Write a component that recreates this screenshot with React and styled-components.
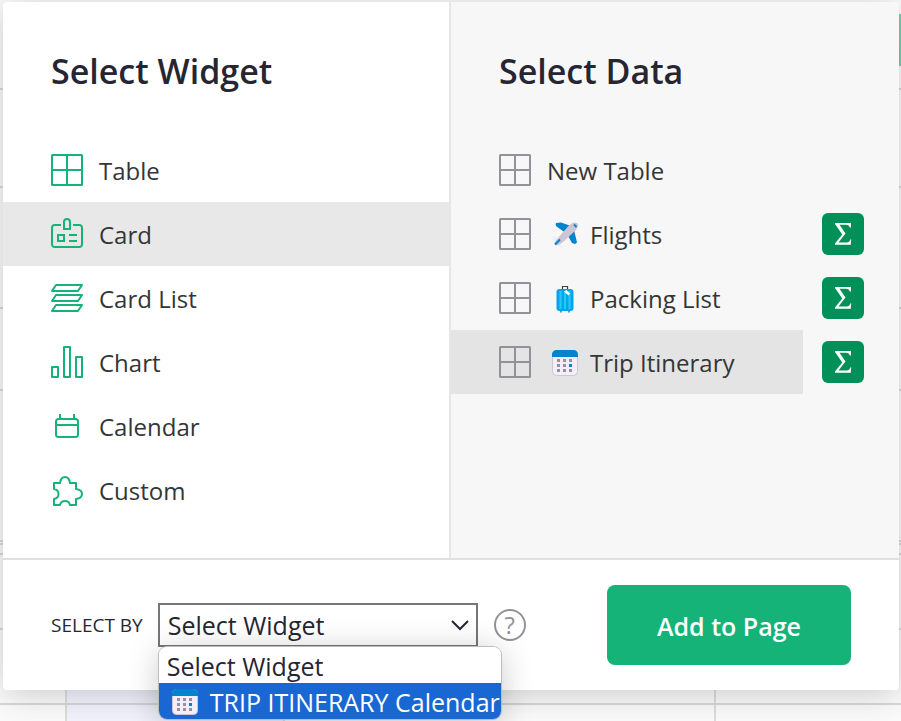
import React, { useState } from "react";
import styled, { createGlobalStyle, css } from "styled-components";

const GlobalStyle = createGlobalStyle`
  *, *::before, *::after { box-sizing: border-box; }
  body {
    margin: 0;
    background: #fff;
    color: #262633;
    font-family: "Open Sans", "Noto Sans", sans-serif;
    font-size: 24px;
    line-height: 32px;
  }
  button, select { font: inherit; color: inherit; }
`;

const Page = styled.div`
  display: grid;
  min-height: 100vh;
`;

const Backdrop = styled.div`
  grid-area: 1 / 1;
  display: flex;
  flex-direction: column;
  background: #fcfcfc;
`;

const BackdropRow = styled.div`
  display: flex;
  justify-content: flex-end;
  height: ${(p) => p.$height}px;
  border-bottom: 2px solid #dadada;
`;

const BackdropAction = styled.div`
  width: 4px;
  height: 52px;
  margin-top: 14px;
  background: #16b378;
  opacity: 0.6;
`;

const BackdropColumns = styled.div`
  flex: 1;
  display: grid;
  grid-template-columns: 67px 218px 431px 1fr;
`;

const BackdropTableRow = styled(BackdropColumns)`
  flex: none;
  height: 75px;
  border-bottom: 2px solid #dadada;
`;

const BackdropCell = styled.div`
  border-right: 2px solid #dedede;
  background: ${(p) => (p.$selected ? "#f4f4ff" : "transparent")};
`;

const Modal = styled.div`
  grid-area: 1 / 1;
  align-self: start;
  z-index: 1;
  display: flex;
  flex-direction: column;
  margin: 2px 2px 31px 3px;
  border-radius: 4px;
  background: #fff;
  box-shadow: 0 4px 36px rgba(38, 38, 51, 0.24);
`;

const Panels = styled.div`
  display: flex;
  border-bottom: 2px solid #e0e0e0;
`;

const Panel = styled.section`
  width: 50%;
  padding-bottom: 36px;
  ${(p) =>
    p.$tinted
      ? css`
          background: #f7f7f7;
          border-radius: 0 4px 0 0;
        `
      : css`
          border-right: 2px solid #e6e6e6;
        `}
`;

const Heading = styled.h2`
  margin: 0;
  padding: 45px 48px 43px;
  font-size: 34px;
  line-height: 48px;
  font-weight: 600;
`;

const List = styled.ul`
  margin: 0;
  padding: 0;
  list-style: none;
`;

const Row = styled.li`
  display: flex;
  align-items: center;
  padding-right: ${(p) => (p.$inset ? 35 : 0)}px;
`;

const Choice = styled.button`
  flex: 1;
  display: flex;
  align-items: center;
  gap: 16px;
  height: 64px;
  padding: 0 0 0 48px;
  border: 0;
  background: ${(p) => (p.$selected ? p.$tone : "transparent")};
  color: #353535;
  text-align: left;
  cursor: pointer;
`;

const ChoiceLabel = styled.span`
  display: flex;
  align-items: center;
  gap: 8px;
  padding-top: 2px;
`;

const Icon = styled.svg`
  flex: none;
  width: 32px;
  height: 32px;
  fill: none;
  stroke: ${(p) => (p.$muted ? "#929299" : "#16b378")};
  stroke-width: 2;
`;

const Emoji = styled.svg`
  flex: none;
  width: 35px;
  height: 28px;
`;

const SummaryButton = styled.button`
  display: grid;
  place-items: center;
  width: 42px;
  height: 42px;
  margin-left: 19px;
  padding: 0;
  border: 0;
  border-radius: 6px;
  background: #009058;
  cursor: pointer;
`;

const SumMark = styled.svg`
  width: 18px;
  height: 24px;
  fill: #fff;
`;

const Footer = styled.footer`
  display: flex;
  align-items: center;
  padding: 25px 48px;
`;

const FieldLabel = styled.label`
  margin-right: 15px;
  font-size: 19px;
  line-height: 24px;
  white-space: nowrap;
`;

const SelectBox = styled.div`
  position: relative;
  width: 320px;
  font-size: 25px;
`;

const Select = styled.select`
  display: block;
  width: 100%;
  height: 44px;
  padding: 0 40px 0 8px;
  appearance: none;
  border: 2px solid #767676;
  border-radius: 0;
  background: #fff;
  outline: none;
`;

const Chevron = styled.svg`
  position: absolute;
  top: 14px;
  right: 8px;
  width: 20px;
  height: 16px;
  fill: none;
  stroke: #262633;
  stroke-width: 2;
  pointer-events: none;
`;

const Menu = styled.ul`
  position: absolute;
  top: 100%;
  left: 1px;
  z-index: 2;
  width: 342px;
  margin: 0;
  padding: 0;
  list-style: none;
  overflow: hidden;
  border-radius: 8px;
  background: #fff;
  box-shadow: 0 0 0 1px #bdbdbd, 0 4px 32px rgba(0, 0, 0, 0.22);
`;

const MenuItem = styled.li`
  display: flex;
  align-items: center;
  gap: 8px;
  height: 36px;
  padding: 2px 0 0 8px;
  white-space: nowrap;
  background: ${(p) => (p.$active ? "#1967d2" : "#fff")};
  color: ${(p) => (p.$active ? "#fff" : "#262633")};
`;

const HelpButton = styled.button`
  flex: none;
  width: 32px;
  height: 32px;
  margin-left: 16px;
  padding: 0;
  border: 2px solid #929299;
  border-radius: 50%;
  background: transparent;
  color: #929299;
  line-height: 28px;
  cursor: pointer;
`;

const PrimaryButton = styled.button`
  width: 244px;
  height: 80px;
  margin-left: auto;
  padding: 2px 0 0;
  border: 0;
  border-radius: 8px;
  background: #16b378;
  color: #fff;
  font-size: 25px;
  font-weight: 600;
  cursor: pointer;
`;

const TableIcon = ({ muted }) => (
  <Icon viewBox="0 0 32 32" $muted={muted} aria-hidden="true">
    <rect x="1" y="1" width="30" height="30" rx="0.5" />
    <path d="M16 1v30M1 16h30" />
  </Icon>
);

const CardIcon = () => (
  <Icon viewBox="0 0 32 32" aria-hidden="true">
    <path d="M10 7H3.5A2.5 2.5 0 0 0 1 9.5V26.5A2.5 2.5 0 0 0 3.5 29H28.5A2.5 2.5 0 0 0 31 26.5V9.5A2.5 2.5 0 0 0 28.5 7H22" />
    <path d="M13 11V4a3 3 0 0 1 6 0v7zM7 17h6v6H7zM18 17h8M18 23h8" />
  </Icon>
);

const CardListIcon = () => (
  <Icon viewBox="0 0 32 32" strokeLinejoin="round" aria-hidden="true">
    <path d="M5 3h26l-4 6H1zM5 13h26l-4 6H1zM5 23h26l-4 6H1z" />
  </Icon>
);

const ChartIcon = () => (
  <Icon viewBox="0 0 32 32" strokeLinejoin="round" aria-hidden="true">
    <path d="M1 21h6v10H1zM13 1h6v30h-6zM25 11h6v20h-6z" />
  </Icon>
);

const CalendarIcon = () => (
  <Icon viewBox="0 0 32 32" aria-hidden="true">
    <rect x="5" y="9" width="22" height="18" rx="2.5" />
    <path d="M5 15h22M9 4v5M23 4v5" />
  </Icon>
);

const PuzzleIcon = () => (
  <Icon viewBox="0 0 32 32" strokeLinejoin="round" aria-hidden="true">
    <path d="M3 9H9C9.5 5.5 11 3 14 3S18.5 5.5 19 9H25V15C28.5 15.5 31 17 31 20S28.5 24.5 25 25V31H19C18.5 28.5 17 27 14 27S9.5 28.5 9 31H3V25C5.5 24.5 7.5 23 7.5 20S5.5 15.5 3 15Z" />
  </Icon>
);

const PlaneEmoji = () => (
  <Emoji viewBox="-1 0 35 28" aria-hidden="true">
    <path d="M8 2 13 1.5 23 5l-6 6.5L8.500 5.500Q7 4 8 2ZM29 21.500l-2 1.500L24 22 19.500 14l6.500-5Z" fill="#0084ce" />
    <path d="M4 15.500 7 15l6 4-1 4 3 3.500-1 1.500L8 22.500 4 16.500Z" fill="#f3eef8" />
    <path d="M23.500 2.500C26 .8 29.500 1 30 3.500Q30.500 6 28 9L14.500 21.500Q10 25 7.500 24T9 18L20 5.500Z" fill="#cdc4d6" />
    <path d="m26 3.500 2.500 2.500M7 23.500l5-5" stroke="#0084ce" strokeWidth="2" />
  </Emoji>
);

const SuitcaseEmoji = () => (
  <Emoji viewBox="-1 0 35 28" aria-hidden="true">
    <path d="M14.500 5V1.500h5V5M13 25v2.500M21 25v2.500" fill="none" stroke="#433b4b" strokeWidth="1.200" />
    <rect x="8.500" y="4" width="17" height="22" rx="3" fill="#00a6ed" />
    <path d="M12.500 6v18M17 6v18M21.500 6v18" stroke="#26c9fc" strokeWidth="2" />
    <path d="m16 6.500 2.500-1.500 3.500 3.500-1.500 2Z" fill="#fff" />
  </Emoji>
);

const CalendarEmoji = () => (
  <Emoji viewBox="-1 0 35 28" aria-hidden="true">
    <rect x="4.500" y="1.500" width="25" height="25" rx="4" fill="#f3eef8" stroke="#cdc4d6" />
    <path d="M4 8V5.500A4.500 4.500 0 0 1 8.500 1h17A4.500 4.500 0 0 1 30 5.500V8Z" fill="#0084ce" />
    <path d="M9 10h3v3H9zM15 10h3v3h-3zM21 10h3v3h-3zM9 15h3v3H9zM15 15h3v3h-3zM9 20h3v3H9zM15 20h3v3h-3zM21 20h3v3h-3z" fill="#998ea4" />
    <path d="M21 15h3v3h-3z" fill="#0084ce" />
  </Emoji>
);

const WIDGETS = [
  { name: "Table", Glyph: TableIcon },
  { name: "Card", Glyph: CardIcon },
  { name: "Card List", Glyph: CardListIcon },
  { name: "Chart", Glyph: ChartIcon },
  { name: "Calendar", Glyph: CalendarIcon },
  { name: "Custom", Glyph: PuzzleIcon },
];

const TABLES = [
  { name: "Flights", Glyph: PlaneEmoji },
  { name: "Packing List", Glyph: SuitcaseEmoji },
  { name: "Trip Itinerary", Glyph: CalendarEmoji },
];

const BACKDROP_ROWS = [98, 121, 82, 151, 3, 10];

export default function App() {
  const [widget, setWidget] = useState("Card");
  const [table, setTable] = useState("Trip Itinerary");

  return (
    <>
      <GlobalStyle />
      <Page>
        <Backdrop aria-hidden="true">
          <BackdropRow $height={90}>
            <BackdropAction />
          </BackdropRow>
          {BACKDROP_ROWS.map((height) => (
            <BackdropRow key={height} $height={height} />
          ))}
          <BackdropTableRow>
            <BackdropCell />
            <BackdropCell $selected />
            <BackdropCell />
          </BackdropTableRow>
          <BackdropTableRow>
            <BackdropCell />
            <BackdropCell $selected />
            <BackdropCell />
          </BackdropTableRow>
          <BackdropColumns>
            <BackdropCell />
            <BackdropCell $selected />
            <BackdropCell />
          </BackdropColumns>
        </Backdrop>

        <Modal role="dialog" aria-label="Add widget">
          <Panels>
            <Panel>
              <Heading>Select Widget</Heading>
              <List>
                {WIDGETS.map(({ name, Glyph }) => (
                  <Row key={name}>
                    <Choice
                      type="button"
                      $tone="#e8e8e8"
                      $selected={widget === name}
                      aria-pressed={widget === name}
                      onClick={() => setWidget(name)}
                    >
                      <Glyph />
                      <ChoiceLabel>{name}</ChoiceLabel>
                    </Choice>
                  </Row>
                ))}
              </List>
            </Panel>
            <Panel $tinted>
              <Heading>Select Data</Heading>
              <List>
                <Row>
                  <Choice
                    type="button"
                    $tone="#e4e4e4"
                    $selected={table === "New Table"}
                    aria-pressed={table === "New Table"}
                    onClick={() => setTable("New Table")}
                  >
                    <TableIcon muted />
                    <ChoiceLabel>New Table</ChoiceLabel>
                  </Choice>
                </Row>
                {TABLES.map(({ name, Glyph }) => (
                  <Row key={name} $inset>
                    <Choice
                      type="button"
                      $tone="#e4e4e4"
                      $selected={table === name}
                      aria-pressed={table === name}
                      onClick={() => setTable(name)}
                    >
                      <TableIcon muted />
                      <ChoiceLabel>
                        <Glyph />
                        {name}
                      </ChoiceLabel>
                    </Choice>
                    <SummaryButton type="button" aria-label={`Summarize ${name}`}>
                      <SumMark viewBox="0 0 18 24" aria-hidden="true">
                        <path d="M1 1H17V5.500H16Q15 2.800 12.500 2.800H5.500L11.500 11.500 4.500 20.500H13Q15.500 20.500 16.200 17.500H17.200L16.800 22.700H1V21.500L8.300 12.500 1 2Z" />
                      </SumMark>
                    </SummaryButton>
                  </Row>
                ))}
              </List>
            </Panel>
          </Panels>

          <Footer>
            <FieldLabel htmlFor="select-by">SELECT BY</FieldLabel>
            <SelectBox>
              <Select id="select-by" defaultValue="none">
                <option value="none">Select Widget</option>
                <option value="trip">TRIP ITINERARY Calendar</option>
              </Select>
              <Chevron viewBox="0 0 20 16" aria-hidden="true">
                <path d="M2 4l8 8 8-8" />
              </Chevron>
              <Menu role="listbox" aria-label="Select by">
                <MenuItem role="option" aria-selected="false">
                  Select Widget
                </MenuItem>
                <MenuItem role="option" aria-selected="true" $active>
                  <CalendarEmoji />
                  TRIP ITINERARY Calendar
                </MenuItem>
              </Menu>
            </SelectBox>
            <HelpButton type="button" aria-label="Help">
              ?
            </HelpButton>
            <PrimaryButton type="button">Add to Page</PrimaryButton>
          </Footer>
        </Modal>
      </Page>
    </>
  );
}
